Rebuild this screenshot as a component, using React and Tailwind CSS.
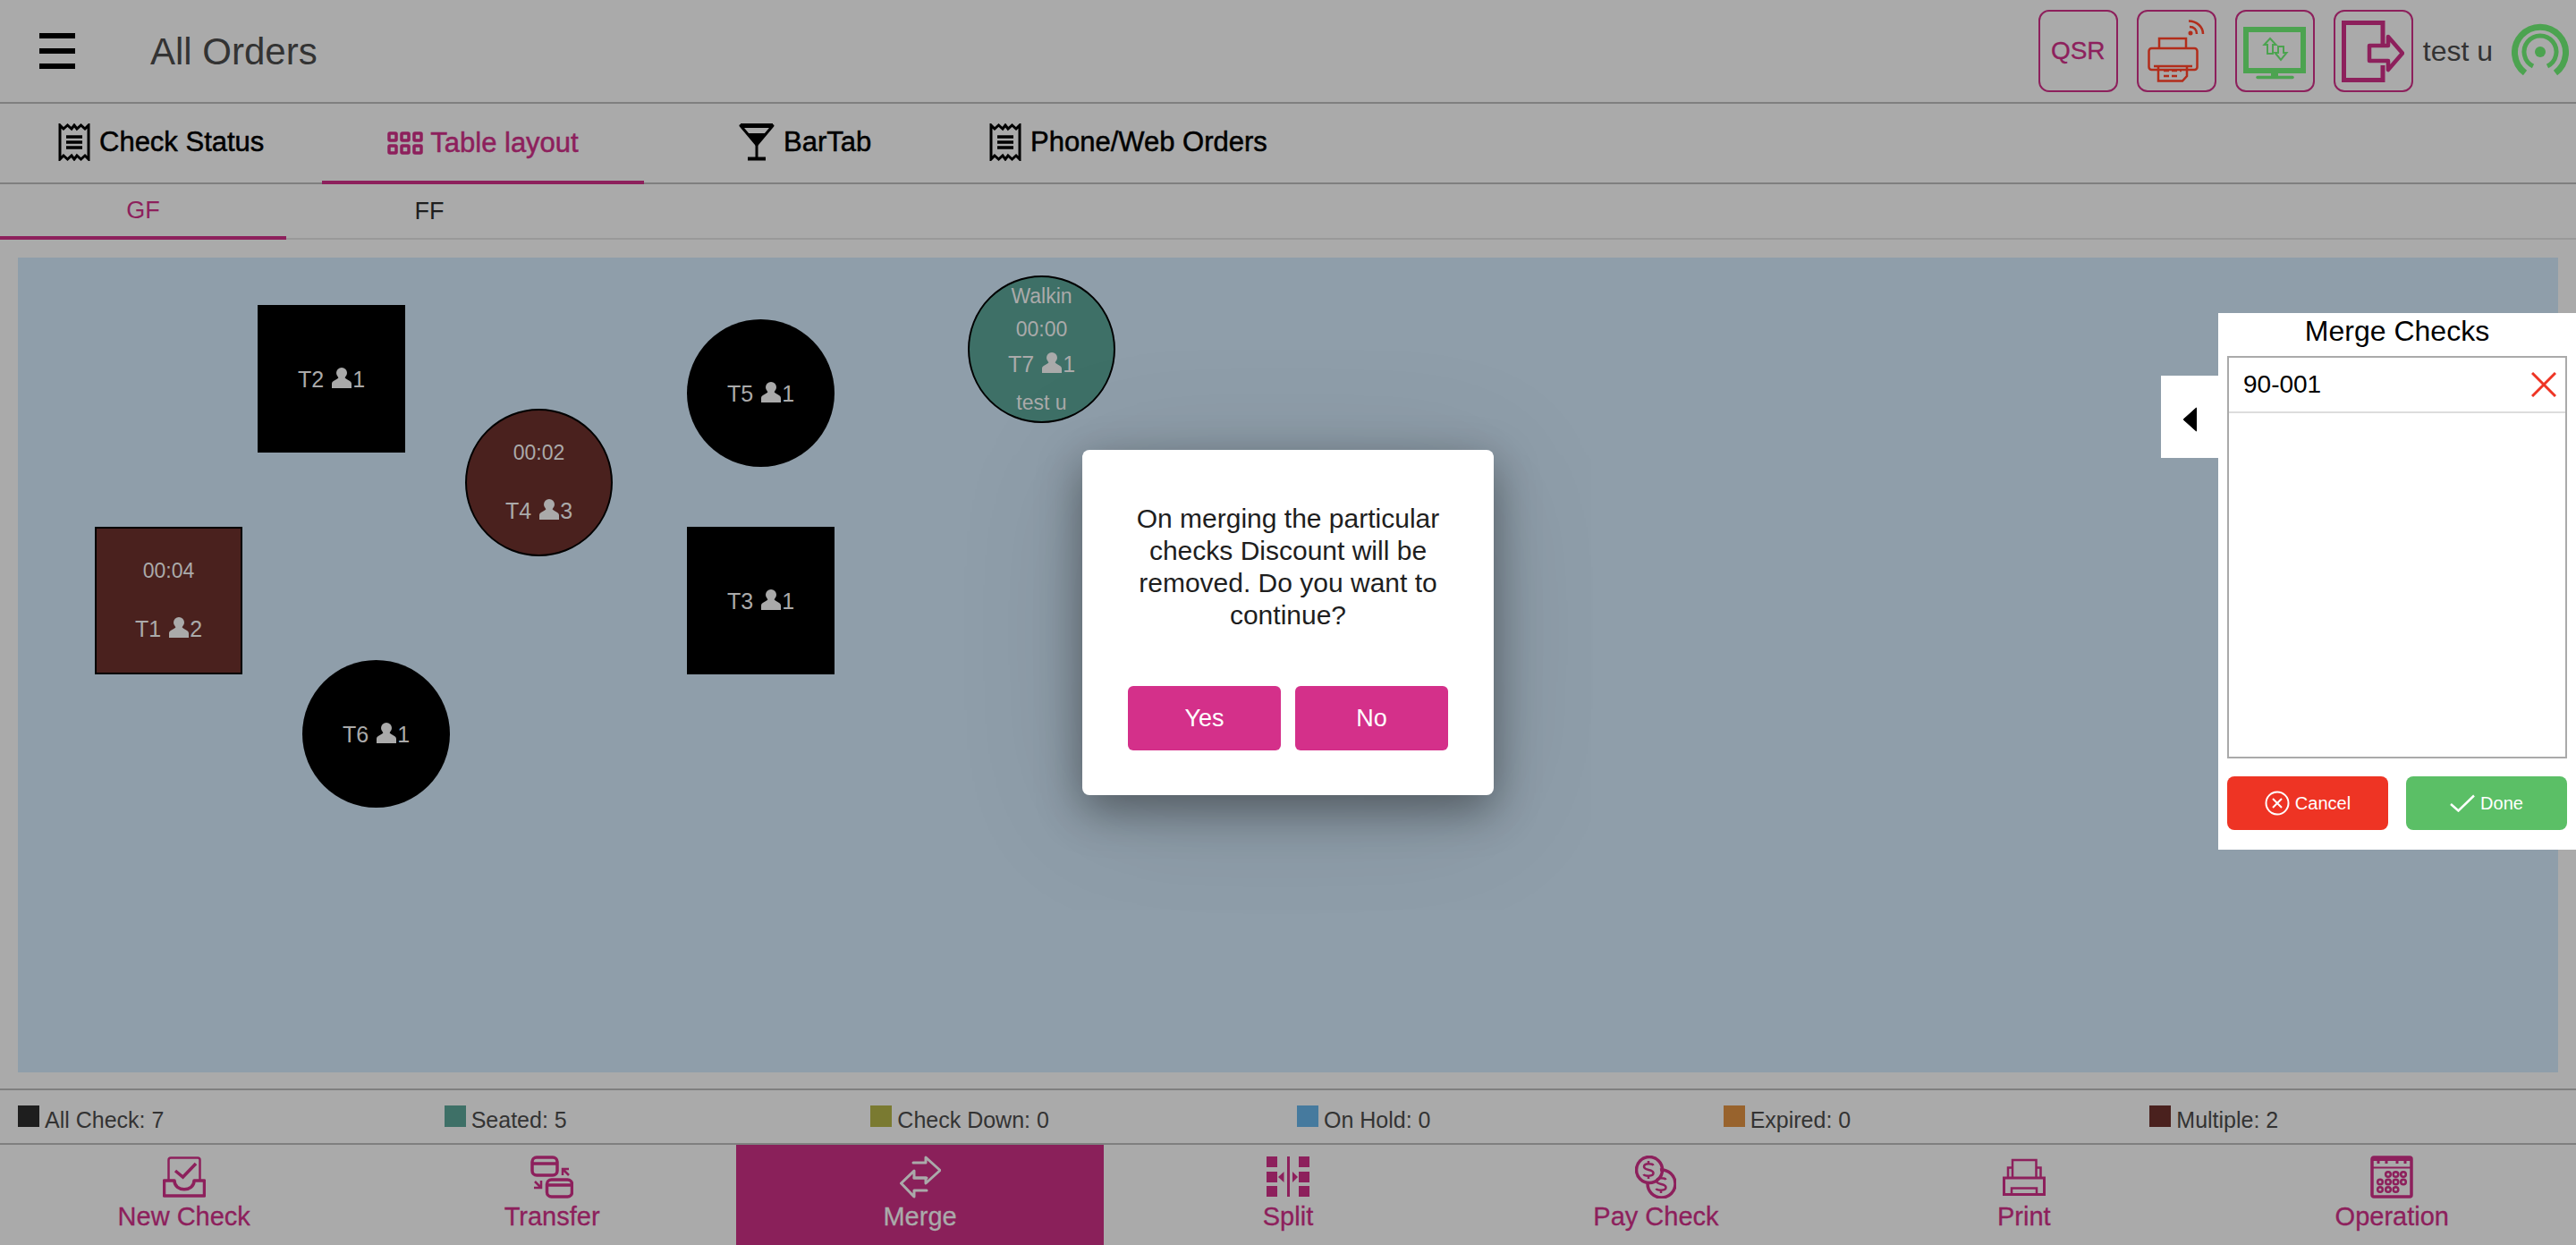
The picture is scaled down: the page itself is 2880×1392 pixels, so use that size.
const MAGENTA = "#8d205c";

const tables = [
  { id: "T2", guests: 1, pos: "left-[268px] top-[53px]", shape: "rounded-none", bg: "bg-black" },
  { id: "T5", guests: 1, pos: "left-[748px] top-[69px]", shape: "rounded-full", bg: "bg-black" },
  { id: "T4", guests: 3, time: "00:02", pos: "left-[500px] top-[169px]", shape: "rounded-full", bg: "bg-[#4a211e] border-2 border-black" },
  { id: "T1", guests: 2, time: "00:04", pos: "left-[86px] top-[301px]", shape: "rounded-none", bg: "bg-[#4a211e] border-2 border-black" },
  { id: "T3", guests: 1, pos: "left-[748px] top-[301px]", shape: "rounded-none", bg: "bg-black" },
  { id: "T6", guests: 1, pos: "left-[318px] top-[450px]", shape: "rounded-full", bg: "bg-black" },
];

const legend = [
  { label: "All Check: 7", color: "bg-[#1e1e1e]" },
  { label: "Seated: 5", color: "bg-[#3e7067]" },
  { label: "Check Down: 0", color: "bg-[#7a7a31]" },
  { label: "On Hold: 0", color: "bg-[#467a9e]" },
  { label: "Expired: 0", color: "bg-[#98632d]" },
  { label: "Multiple: 2", color: "bg-[#4a211e]" },
];

function Person() {
  return (
    <svg width="22" height="23" viewBox="0 0 22 23" className="mx-[1px] -mt-[3px]" fill="#aaaaaa">
      <circle cx="11" cy="6" r="6" />
      <path d="M0 23V18C0 14.500 6 13.500 7.500 11H14.500C16 13.500 22 14.500 22 18V23Z" />
    </svg>
  );
}

function TableLabel({ id, guests }) {
  return (
    <div className="flex items-center h-[30px] text-[25px] leading-[30px]">
      <span className="mr-[8px]">{id}</span>
      <Person />
      <span>{guests}</span>
    </div>
  );
}

function Table({ t }) {
  return (
    <div
      className={`absolute w-[165px] h-[165px] flex flex-col items-center justify-center gap-[36px] text-[#aaaaaa] ${t.pos} ${t.shape} ${t.bg}`}
    >
      {t.time && <div className="text-[23px] leading-[27px]">{t.time}</div>}
      <TableLabel id={t.id} guests={t.guests} />
    </div>
  );
}

function ReceiptIcon() {
  return (
    <svg width="36" height="42" viewBox="0 0 36 42" fill="none" stroke="#000" strokeWidth="3">
      <path d="M2 2L6 6L10.500 2L15 6L18 2L21 6L25.500 2L30 6L34 2V40L30 36L25.500 40L21 36L18 40L15 36L10.500 40L6 36L2 40Z" />
      <path d="M9 15H27M9 21H27M9 27H27" strokeWidth="3.500" />
    </svg>
  );
}

function GridIcon() {
  return (
    <svg width="40" height="26" viewBox="0 0 40 26" fill="none" stroke={MAGENTA} strokeWidth="3.500">
      <rect x="2" y="2" width="8" height="8" rx="1" />
      <rect x="16" y="2" width="8" height="8" rx="1" />
      <rect x="30" y="2" width="8" height="8" rx="1" />
      <rect x="2" y="16" width="8" height="8" rx="1" />
      <rect x="16" y="16" width="8" height="8" rx="1" />
      <rect x="30" y="16" width="8" height="8" rx="1" />
    </svg>
  );
}

function MartiniIcon() {
  return (
    <svg width="40" height="42" viewBox="0 0 40 42" fill="none" stroke="#000" strokeWidth="3">
      <path d="M2 2.500H38L20 24Z" strokeLinejoin="round" />
      <path d="M2 2.500H38" strokeWidth="5" />
      <path d="M9 11H31L20 24Z" fill="#000" stroke="none" />
      <path d="M20 24V38" />
      <path d="M10 39.500H30" strokeWidth="4" />
    </svg>
  );
}

function NewCheckIcon() {
  return (
    <svg width="48" height="46" viewBox="0 0 48 46" fill="none" stroke={MAGENTA} strokeWidth="3">
      <path d="M6.500 27V4C6.500 2.500 7.500 1.500 9 1.500H39C40.500 1.500 41.500 2.500 41.500 4V27" strokeWidth="2.500" />
      <path d="M14 16L22.500 23L37 8" strokeWidth="3.500" />
      <path d="M1.500 27H13C13 40 35 40 35 27H46.500V44H1.500Z" strokeLinejoin="round" strokeWidth="3.500" />
    </svg>
  );
}

function TransferIcon() {
  return (
    <svg width="48" height="48" viewBox="0 0 48 48" fill="none" stroke={MAGENTA} strokeWidth="3.500">
      <rect x="2" y="2" width="28" height="20" rx="5" />
      <path d="M2 9H30" />
      <rect x="18.500" y="27" width="28" height="19" rx="5" />
      <path d="M18.500 33H46.500" />
      <path d="M36 22V15H43M36 15L43 22" strokeWidth="2.500" />
      <path d="M12 28V36H4M12 36L5 29" strokeWidth="2.500" />
    </svg>
  );
}

function MergeIcon() {
  return (
    <svg width="46" height="48" viewBox="0 0 46 48" fill="none" stroke="#aaaaaa" strokeWidth="3" strokeLinecap="round" strokeLinejoin="round">
      <path d="M15 8H29V2L45 16.500L29 31V25H16" />
      <path d="M30 39H16V46L1.500 31L16 17V25H30" />
    </svg>
  );
}

function SplitIcon() {
  return (
    <svg width="48" height="46" viewBox="0 0 48 46" fill={MAGENTA}>
      <rect x="0" y="0" width="12" height="12" />
      <rect x="0" y="17" width="12" height="12" />
      <rect x="0" y="33" width="12" height="12" />
      <rect x="36" y="0" width="12" height="12" />
      <rect x="36" y="17" width="12" height="12" />
      <rect x="36" y="33" width="12" height="12" />
      <rect x="23" y="0" width="3" height="45" />
      <path d="M19.500 17V29L13 23Z" />
      <path d="M29 17V29L35 23Z" />
    </svg>
  );
}

function Dollar({ x, y }) {
  return (
    <g transform={`translate(${x} ${y})`}>
      <path d="M5.500 -5C4.500 -7 -5 -8 -5 -3.500C-5 1 5.500 -1 5.500 3.500C5.500 8 -4.500 7 -5.500 5M0 -10V-7M0 7V10" strokeWidth="2.500" />
    </g>
  );
}

function PayCheckIcon() {
  return (
    <svg width="46" height="48" viewBox="0 0 46 48" fill="none" stroke={MAGENTA} strokeWidth="3.500">
      <path d="M14 31.500A15.500 15.500 0 0 0 45 31.500A15.500 15.500 0 0 0 28 16" />
      <circle cx="16" cy="16" r="14.500" />
      <Dollar x={15} y={16} />
      <Dollar x={29} y={32} />
    </svg>
  );
}

function PrintIcon() {
  return (
    <svg width="48" height="42" viewBox="0 0 48 42" fill="none" stroke={MAGENTA} strokeWidth="2.500">
      <path d="M11 21V2H37.500V21" />
      <path d="M6 21V10.500H11M37.500 10.500H42.500V21" />
      <path d="M1.500 22H46.500V40.500H1.500Z" strokeWidth="3" />
      <path d="M10 40V33.500H38V40" />
    </svg>
  );
}

function OperationIcon() {
  const dots = [
    [20, 21], [28.500, 21], [37, 21],
    [11, 29.500], [20, 29.500], [28.500, 29.500], [37, 29.500],
    [11, 38], [20, 38], [28.500, 38],
  ];
  return (
    <svg width="48" height="48" viewBox="0 0 48 48" fill="none" stroke={MAGENTA}>
      <rect x="2" y="2" width="44" height="44" rx="2" strokeWidth="3.500" />
      <path d="M2 3.500H46" strokeWidth="5" />
      <path d="M2 13.500H46" strokeWidth="2" />
      <path d="M9 2V9M18 2V9M30 2V9M39 2V9" strokeWidth="3" />
      {dots.map(([cx, cy]) => (
        <circle key={`${cx}-${cy}`} cx={cx} cy={cy} r="2.800" strokeWidth="2.500" />
      ))}
    </svg>
  );
}

const actions = [
  { label: "New Check", icon: <NewCheckIcon /> },
  { label: "Transfer", icon: <TransferIcon /> },
  { label: "Merge", icon: <MergeIcon />, active: true },
  { label: "Split", icon: <SplitIcon /> },
  { label: "Pay Check", icon: <PayCheckIcon /> },
  { label: "Print", icon: <PrintIcon /> },
  { label: "Operation", icon: <OperationIcon /> },
];

function HeaderBox({ children }) {
  return (
    <div className="w-[89px] h-[92px] border-2 border-[#8d205c] rounded-[12px] flex items-center justify-center">
      {children}
    </div>
  );
}

export default function App() {
  return (
    <div className="relative w-[2880px] h-[1392px] overflow-hidden bg-[#aaaaaa] font-['Liberation_Sans',sans-serif]">
      {/* top bar */}
      <div className="h-[116px] border-b-2 border-[#7f7f7f] flex items-center pl-[44px] pr-[8px]">
        <div className="w-[40px] h-[40px] flex flex-col justify-between">
          <div className="h-[6px] bg-black" />
          <div className="h-[6px] bg-black" />
          <div className="h-[6px] bg-black" />
        </div>
        <div className="ml-[84px] text-[42px] text-[#333333]">All Orders</div>
        <div className="ml-auto flex items-center gap-[21px]">
          <HeaderBox>
            <span className="text-[28px] text-[#8d205c] [-webkit-text-stroke:0.3px_#8d205c]">QSR</span>
          </HeaderBox>
          <HeaderBox>
            <svg width="64" height="70" viewBox="0 0 64 70" fill="none" stroke="#b22d1b" strokeWidth="2.500">
              <circle cx="48" cy="15" r="2.500" fill="#b22d1b" stroke="none" />
              <path d="M47 8C52 8 55 11 55 16" />
              <path d="M46 1.500C55 1.500 62 8 62 16" />
              <path d="M13 32V21H43V32" />
              <rect x="1.500" y="32" width="54" height="24" rx="3" />
              <path d="M7 52H50" />
              <path d="M12 52V68.500H39L44 63V52" />
              <path d="M18 57H38M18 63H34" strokeDasharray="6 3" />
            </svg>
          </HeaderBox>
          <HeaderBox>
            <svg className="mt-[5px]" width="70" height="60" viewBox="0 0 70 60" fill="none" stroke="#4ca350">
              <rect x="3" y="3" width="64" height="46" strokeWidth="6" />
              <path d="M35 51V55" strokeWidth="8" />
              <path d="M16 56.500H55" strokeWidth="3.500" strokeLinecap="round" />
              <path d="M23.500 20L30 13L36.500 20H33V30H27V20Z" strokeWidth="2" />
              <path d="M35.500 29L42 37L48.500 29H45V22H39V29Z" strokeWidth="2" />
            </svg>
          </HeaderBox>
          <HeaderBox>
            <svg width="70" height="69" viewBox="0 0 70 69" fill="none" stroke="#8d205c" strokeWidth="5">
              <path d="M46 28V2.500H2.500V66.500H46V50" />
              <path d="M31 28H52V18L68 36.500L52 55V45H31Z" strokeLinejoin="round" strokeWidth="4.500" />
            </svg>
          </HeaderBox>
        </div>
        <div className="ml-[11px] text-[32px] text-[#333333]">test u</div>
        <svg className="ml-[21px]" width="64" height="64" viewBox="0 0 64 64" fill="none" stroke="#4ca350">
          <circle cx="32" cy="33" r="6" fill="#4ca350" stroke="none" />
          <path d="M24 49A18 18 0 1 1 40 49" strokeWidth="5" />
          <path d="M15 56.500A28.500 28.500 0 1 1 49 56.500" strokeWidth="7" />
        </svg>
      </div>

      {/* main tabs */}
      <div className="h-[90px] border-b-2 border-[#7f7f7f] flex text-[31px] text-black [-webkit-text-stroke:0.5px]">
        <div className="w-[360px] pl-[65px] flex items-center gap-[10px] pb-[2px]">
          <ReceiptIcon />
          <span>Check Status</span>
        </div>
        <div className="w-[360px] flex items-center justify-center gap-[8px] border-b-[4px] border-[#8d205c] text-[#8d205c] -mb-[2px] pt-[2px]">
          <GridIcon />
          <span>Table layout</span>
        </div>
        <div className="w-[386px] pl-[106px] flex items-center gap-[10px] pb-[2px]">
          <MartiniIcon />
          <span>BarTab</span>
        </div>
        <div className="flex items-center gap-[10px] pb-[2px]">
          <ReceiptIcon />
          <span>Phone/Web Orders</span>
        </div>
      </div>

      {/* floors */}
      <div className="h-[62px] border-b-2 border-[#999999] flex text-[27px]">
        <div className="w-[320px] flex items-center justify-center border-b-[4px] border-[#8d205c] text-[#8d205c] -mb-[2px] pt-[1px]">GF</div>
        <div className="w-[320px] flex items-center justify-center text-[#1e1e1e] pt-[1px]">FF</div>
      </div>

      {/* floor plan */}
      <div className="relative mx-[20px] mt-[20px] h-[911px] bg-[#8f9eaa]">
        {tables.map((t) => (
          <Table key={t.id} t={t} />
        ))}
        <div className="absolute left-[1062px] top-[20px] w-[165px] h-[165px] rounded-full bg-[#3e7067] border-2 border-black flex flex-col items-center text-[#aaaaaa] text-[23px]">
          <div className="leading-[27px] mt-[8px]">Walkin</div>
          <div className="leading-[27px] mt-[10px]">00:00</div>
          <div className="mt-[10px]">
            <TableLabel id="T7" guests={1} />
          </div>
          <div className="leading-[27px] mt-[15px]">test u</div>
        </div>
      </div>

      {/* legend */}
      <div className="mt-[18px] h-[63px] border-y-2 border-[#7f7f7f] pl-[20px] pt-[17px] grid grid-cols-6">
        {legend.map((l) => (
          <div key={l.label} className="flex items-start gap-[6px]">
            <div className={`w-[24px] h-[24px] ${l.color}`} />
            <div className="mt-[2px] text-[25px] leading-[28px] text-[#333333]">{l.label}</div>
          </div>
        ))}
      </div>

      {/* actions */}
      <div className="h-[112px] grid grid-cols-7">
        {actions.map((a) => (
          <div
            key={a.label}
            className={`flex flex-col items-center pt-[12px] ${a.active ? "bg-[#8a205a] text-[#aaaaaa]" : "text-[#8d205c]"}`}
          >
            <div className="h-[48px] flex items-center justify-center">{a.icon}</div>
            <div className="mt-[2px] text-[29px] leading-[36px] [-webkit-text-stroke:0.3px]">{a.label}</div>
          </div>
        ))}
      </div>

      {/* merge panel */}
      <div className="absolute left-[2480px] top-[350px] w-[400px] h-[600px] bg-white px-[10px] flex flex-col">
        <div className="absolute -left-[64px] top-[70px] w-[64px] h-[92px] bg-white flex items-center justify-center">
          <svg className="mt-[6px]" width="16" height="28" viewBox="0 0 16 28">
            <path d="M15.500 1V27L1 14Z" fill="#000" stroke="#000" strokeLinejoin="round" />
          </svg>
        </div>
        <div className="h-[48px] text-center text-[32px] leading-[40px] text-black">Merge Checks</div>
        <div className="h-[450px] border-2 border-[#aaaaaa]">
          <div className="h-[62px] border-b-2 border-[#dddddd] flex items-center justify-between pl-[16px] pr-[10px]">
            <span className="text-[28px] text-black">90-001</span>
            <svg width="28" height="28" viewBox="0 0 28 28" stroke="#ee3424" strokeWidth="3">
              <path d="M1 1L27 27M27 1L1 27" />
            </svg>
          </div>
        </div>
        <div className="mt-[20px] flex justify-between">
          <div className="w-[180px] h-[60px] rounded-[8px] bg-[#ee3424] flex items-center justify-center gap-[6px] text-[20px] text-white">
            <svg width="28" height="28" viewBox="0 0 28 28" fill="none" stroke="#fff" strokeWidth="2">
              <circle cx="14" cy="14" r="12.500" />
              <path d="M9 9L19 19M19 9L9 19" />
            </svg>
            <span>Cancel</span>
          </div>
          <div className="w-[180px] h-[60px] rounded-[8px] bg-[#5bbf66] flex items-center justify-center gap-[6px] text-[20px] text-white">
            <svg width="28" height="20" viewBox="0 0 28 20" fill="none" stroke="#fff" strokeWidth="2.500">
              <path d="M1 11L9.500 18.500L27 1.500" />
            </svg>
            <span>Done</span>
          </div>
        </div>
      </div>

      {/* discount alert */}
      <div className="absolute left-[1210px] top-[503px] w-[460px] h-[386px] rounded-[8px] bg-white px-[51px] pt-[59px] shadow-[0_16px_50px_rgba(0,0,0,0.4),0_20px_150px_rgba(0,0,0,0.12)]">
        <p className="text-center text-[30px] leading-[36px] text-[#1e1e1e] -mx-[10px]">
          On merging the particular checks Discount will be removed. Do you want to continue?
        </p>
        <div className="mt-[61px] flex justify-between">
          <div className="w-[171px] h-[72px] rounded-[6px] bg-[#d4308a] flex items-center justify-center text-[27px] text-white">Yes</div>
          <div className="w-[171px] h-[72px] rounded-[6px] bg-[#d4308a] flex items-center justify-center text-[27px] text-white">No</div>
        </div>
      </div>
    </div>
  );
}
